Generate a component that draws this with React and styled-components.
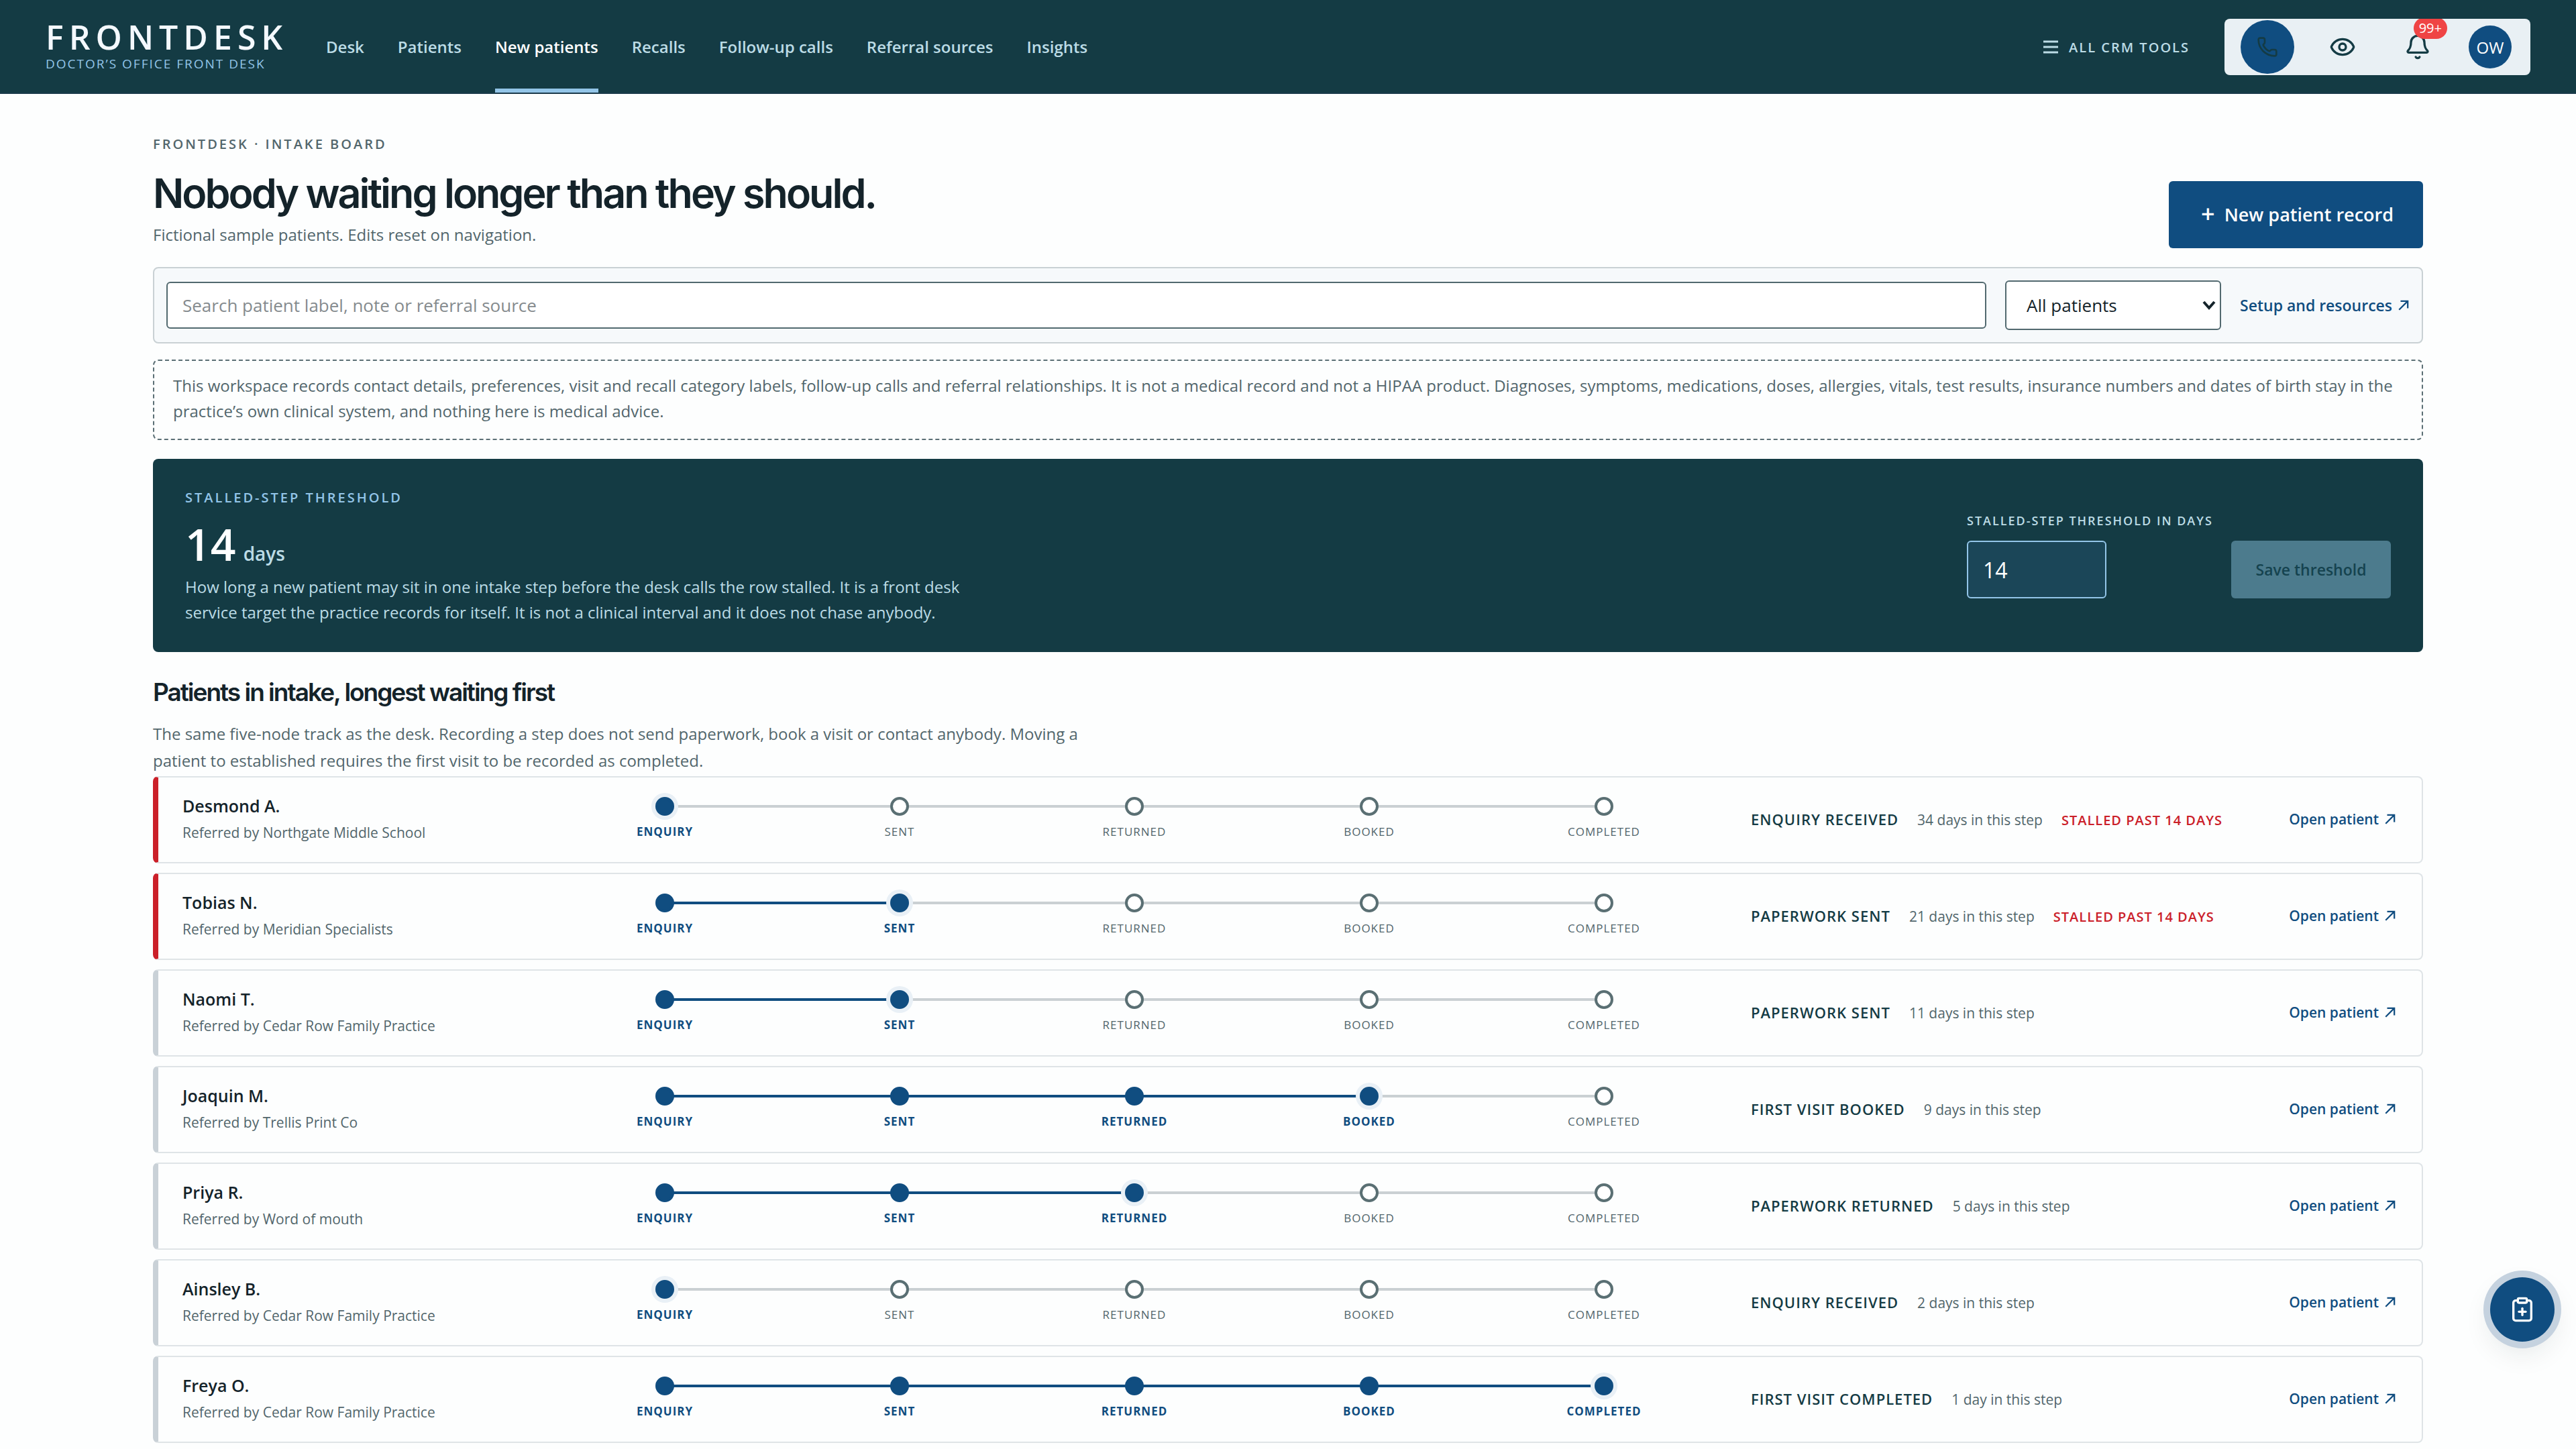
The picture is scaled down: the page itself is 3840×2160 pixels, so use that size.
import React, { useState } from "react";
import styled, { createGlobalStyle } from "styled-components";
import { Bell, ClipboardPlus, Eye, Phone } from "lucide-react";

const INK = "#14232a";
const DEEP = "#143b44";
const BLUE = "#104d80";
const MUTED = "#52666c";
const SKY = "#93c5e8";
const PALE = "#bcdce6";
const RED = "#cb2029";
const BODY_FONT = `"Trebuchet MS", "Open Sans", sans-serif`;

const navItems = [
  "Desk",
  "Patients",
  "New patients",
  "Recalls",
  "Follow-up calls",
  "Referral sources",
  "Insights",
];

const steps = ["Enquiry", "Sent", "Returned", "Booked", "Completed"];

const statusNames = [
  "Enquiry received",
  "Paperwork sent",
  "Paperwork returned",
  "First visit booked",
  "First visit completed",
];

const patients = [
  { name: "Desmond A.", source: "Northgate Middle School", step: 0, days: 34 },
  { name: "Tobias N.", source: "Meridian Specialists", step: 1, days: 21 },
  { name: "Naomi T.", source: "Cedar Row Family Practice", step: 1, days: 11 },
  { name: "Joaquin M.", source: "Trellis Print Co", step: 3, days: 9 },
  { name: "Priya R.", source: "Word of mouth", step: 2, days: 5 },
  { name: "Ainsley B.", source: "Cedar Row Family Practice", step: 0, days: 2 },
  { name: "Freya O.", source: "Cedar Row Family Practice", step: 4, days: 1 },
];

const ArrowIcon = () => (
  <Arrow viewBox="0 0 16 16" aria-hidden="true">
    <path d="M2 14 L13 3 M4 2.5 H13.5 V12" />
  </Arrow>
);

const MenuIcon = () => (
  <svg width="22" height="20" viewBox="0 0 22 20" aria-hidden="true">
    <path
      d="M0 2 H22 M0 10 H22 M0 18 H22"
      stroke="currentColor"
      strokeWidth="3"
    />
  </svg>
);

const PatientRow = ({ patient, threshold }) => {
  const stalled = patient.days > threshold;

  return (
    <Row $stalled={stalled}>
      <div>
        <PatientName>{patient.name}</PatientName>
        <Referral>Referred by {patient.source}</Referral>
      </div>
      <Track>
        {steps.map((step, i) => (
          <Step
            key={step}
            $done={i <= patient.step}
            $lineDone={i < patient.step}
          >
            <Node $done={i <= patient.step} $current={i === patient.step} />
            {step}
          </Step>
        ))}
      </Track>
      <Status>
        <StatusName>{statusNames[patient.step]}</StatusName>
        <span>
          {patient.days} {patient.days === 1 ? "day" : "days"} in this step
        </span>
        {stalled ? <Stalled>Stalled past {threshold} days</Stalled> : null}
      </Status>
      <OpenLink href="#patient">
        Open patient
        <ArrowIcon />
      </OpenLink>
    </Row>
  );
};

const App = () => {
  const [search, setSearch] = useState("");
  const [filter, setFilter] = useState("all");
  const [draft, setDraft] = useState("14");
  const [threshold, setThreshold] = useState(14);

  const onSubmitHandler = (e) => {
    e.preventDefault();
    setThreshold(Number(draft));
  };

  const visible = patients.filter(
    (item) =>
      `${item.name} ${item.source}`
        .toLowerCase()
        .includes(search.toLowerCase()) &&
      (filter === "all" || item.days > threshold)
  );

  return (
    <>
      <GlobalStyle />
      <Header>
        <Brand href="#home">
          <Logo>FRONTDESK</Logo>
          <Tagline>Doctor’s office front desk</Tagline>
        </Brand>
        <Nav>
          {navItems.map((item) => (
            <NavLink key={item} href="#nav" $active={item === "New patients"}>
              {item}
            </NavLink>
          ))}
        </Nav>
        <ToolsButton type="button">
          <MenuIcon />
          All CRM tools
        </ToolsButton>
        <Dock>
          <CallButton type="button" aria-label="Call">
            <Phone size={32} strokeWidth={2} />
          </CallButton>
          <DockButton type="button" aria-label="Preview">
            <Eye size={40} strokeWidth={2} />
          </DockButton>
          <DockButton type="button" aria-label="Notifications">
            <Bell size={40} strokeWidth={2} />
            <Badge>99+</Badge>
          </DockButton>
          <Avatar type="button">OW</Avatar>
        </Dock>
      </Header>

      <Main>
        <Heading>
          <div>
            <Eyebrow>Frontdesk · Intake board</Eyebrow>
            <Title>Nobody waiting longer than they should.</Title>
            <Subtitle>Fictional sample patients. Edits reset on navigation.</Subtitle>
          </div>
          <NewButton type="button">
            <Plus>+</Plus>New patient record
          </NewButton>
        </Heading>

        <FilterBar>
          <SearchInput
            type="text"
            aria-label="Search patients"
            value={search}
            placeholder="Search patient label, note or referral source"
            onChange={(e) => setSearch(e.target.value)}
          />
          <SelectWrap>
            <FilterSelect
              aria-label="Filter patients"
              value={filter}
              onChange={(e) => setFilter(e.target.value)}
            >
              <option value="all">All patients</option>
              <option value="stalled">Stalled</option>
            </FilterSelect>
            <Chevron viewBox="0 0 20 14" aria-hidden="true">
              <path d="M2 2 L10 11 L18 2" />
            </Chevron>
          </SelectWrap>
          <SetupLink href="#setup">
            Setup and resources
            <ArrowIcon />
          </SetupLink>
        </FilterBar>

        <Notice>
          This workspace records contact details, preferences, visit and recall
          category labels, follow-up calls and referral relationships. It is not
          a medical record and not a HIPAA product. Diagnoses, symptoms,
          medications, doses, allergies, vitals, test results, insurance numbers
          and dates of birth stay in the practice’s own clinical system, and
          nothing here is medical advice.
        </Notice>

        <Threshold>
          <div>
            <ThresholdLabel>Stalled-step threshold</ThresholdLabel>
            <ThresholdValue>
              {threshold} <small>days</small>
            </ThresholdValue>
            <ThresholdText>
              How long a new patient may sit in one intake step before the desk
              calls the row stalled. It is a front desk service target the
              practice records for itself. It is not a clinical interval and it
              does not chase anybody.
            </ThresholdText>
          </div>
          <ThresholdForm onSubmit={onSubmitHandler}>
            <Field>
              <FieldLabel htmlFor="threshold">
                Stalled-step threshold in days
              </FieldLabel>
              <DaysInput
                id="threshold"
                type="text"
                inputMode="numeric"
                value={draft}
                onChange={(e) => setDraft(e.target.value)}
              />
            </Field>
            <SaveButton type="submit" disabled={Number(draft) === threshold}>
              Save threshold
            </SaveButton>
          </ThresholdForm>
        </Threshold>

        <SectionTitle>Patients in intake, longest waiting first</SectionTitle>
        <SectionText>
          The same five-node track as the desk. Recording a step does not send
          paperwork, book a visit or contact anybody. Moving a patient to
          established requires the first visit to be recorded as completed.
        </SectionText>
        <List>
          {visible.map((item) => (
            <PatientRow key={item.name} patient={item} threshold={threshold} />
          ))}
        </List>
      </Main>

      <QuickAdd type="button" aria-label="Quick add">
        <ClipboardPlus size={40} strokeWidth={2} />
      </QuickAdd>
    </>
  );
};

export default App;

const GlobalStyle = createGlobalStyle`
  * {
    box-sizing: border-box;
  }
  body {
    margin: 0;
    background: #fdfefe;
    color: ${INK};
    font-family: ${BODY_FONT};
    font-size: 24px;
  }
  button, input, select {
    font-family: inherit;
  }
  button {
    border: none;
    cursor: pointer;
  }
  a {
    text-decoration: none;
  }
  h1, h2, p, ul, ol {
    margin: 0;
    padding: 0;
    list-style: none;
  }
`;

const Header = styled.header`
  display: flex;
  align-items: center;
  height: 140px;
  padding: 0 68px;
  background: ${DEEP};
  box-shadow: inset 0 -2px 0 #1b3a4a;
`;

const Brand = styled.a`
  display: flex;
  flex-direction: column;
  width: 370px;
  margin-right: 48px;
  padding-bottom: 6px;
  white-space: nowrap;
`;

const Logo = styled.span`
  color: #f4f9ff;
  font-size: 50px;
  line-height: 56px;
  font-weight: 600;
  letter-spacing: 8px;
`;

const Tagline = styled.span`
  color: ${SKY};
  font-size: 19px;
  line-height: 24px;
  letter-spacing: 2px;
  text-transform: uppercase;
`;

const Nav = styled.nav`
  display: flex;
  align-self: stretch;
  gap: 50px;
  padding-bottom: 2px;
`;

const NavLink = styled.a`
  display: flex;
  align-items: center;
  padding-top: 6px;
  border-bottom: 6px solid ${({ $active }) => ($active ? SKY : "transparent")};
  color: ${({ $active }) => ($active ? "#ffffff" : PALE)};
  font-weight: 600;
  white-space: nowrap;
`;

const ToolsButton = styled.button`
  display: flex;
  align-items: center;
  gap: 16px;
  margin: 0 52px 0 auto;
  padding: 0;
  background: none;
  color: ${PALE};
  font-size: 20px;
  font-weight: 600;
  letter-spacing: 2px;
  text-transform: uppercase;
`;

const Dock = styled.div`
  display: flex;
  align-items: center;
  gap: 32px;
  height: 84px;
  padding: 0 28px 0 24px;
  border-radius: 8px;
  background: #e9f0f4;
  overflow: hidden;
`;

const DockButton = styled.button`
  position: relative;
  display: flex;
  align-items: center;
  justify-content: center;
  width: 80px;
  height: 80px;
  padding: 0;
  border-radius: 50%;
  background: none;
  color: ${DEEP};
`;

const CallButton = styled(DockButton)`
  background: ${BLUE};
`;

const Badge = styled.span`
  position: absolute;
  top: -4px;
  right: -4px;
  padding: 0 8px;
  border-radius: 16px;
  background: #ef4444;
  color: #ffffff;
  font-size: 20px;
  line-height: 32px;
`;

const Avatar = styled(DockButton)`
  width: 64px;
  height: 64px;
  margin-left: 4px;
  background: ${BLUE};
  color: #ffffff;
  font-size: 24px;
`;

const Main = styled.main`
  padding: 60px 228px 0;
`;

const Heading = styled.div`
  display: flex;
  align-items: flex-end;
  justify-content: space-between;
`;

const Eyebrow = styled.p`
  color: ${MUTED};
  font-size: 20px;
  line-height: 30px;
  font-weight: 600;
  letter-spacing: 3px;
  text-transform: uppercase;
`;

const Title = styled.h1`
  margin-top: 20px;
  font-family: Inter, sans-serif;
  font-size: 61px;
  line-height: 76px;
  font-weight: 600;
  letter-spacing: -3px;
`;

const Subtitle = styled.p`
  margin-top: 4px;
  color: ${MUTED};
  line-height: 40px;
`;

const NewButton = styled.button`
  display: flex;
  align-items: center;
  gap: 14px;
  height: 100px;
  padding: 0 44px 2px 48px;
  border-radius: 6px;
  background: ${BLUE};
  color: #ffffff;
  font-size: 27px;
  font-weight: 600;
`;

const Plus = styled.span`
  font-size: 36px;
  line-height: 36px;
`;

const FilterBar = styled.div`
  display: flex;
  align-items: center;
  gap: 28px;
  margin-top: 28px;
  padding: 18px;
  border: 2px solid #c9d1d4;
  border-radius: 8px;
  background: #f6f9fb;
`;

const SearchInput = styled.input`
  flex: 1;
  min-width: 0;
  height: 70px;
  padding: 0 22px;
  border: 2px solid #52696f;
  border-radius: 6px;
  background: #ffffff;
  color: ${INK};
  font-size: 26px;
  &::placeholder {
    color: #858b8e;
  }
`;

const SelectWrap = styled.div`
  position: relative;
  width: 322px;
`;

const FilterSelect = styled.select`
  appearance: none;
  display: block;
  width: 100%;
  height: 74px;
  padding: 0 40px 0 30px;
  border: 2px solid #52696f;
  border-radius: 6px;
  background: #ffffff;
  color: ${INK};
  font-size: 26px;
`;

const Chevron = styled.svg`
  position: absolute;
  top: 30px;
  right: 8px;
  width: 20px;
  height: 14px;
  fill: none;
  stroke: ${INK};
  stroke-width: 4;
  pointer-events: none;
`;

const SetupLink = styled.a`
  display: flex;
  align-items: center;
  gap: 8px;
  color: ${BLUE};
  font-size: 23px;
  font-weight: 600;
  white-space: nowrap;
`;

const Arrow = styled.svg`
  flex-shrink: 0;
  width: 18px;
  height: 18px;
  fill: none;
  stroke: currentColor;
  stroke-width: 2;
`;

const Notice = styled.p`
  margin-top: 24px;
  padding: 18px 28px 22px;
  border: 2px dashed #5b6f75;
  border-radius: 8px;
  color: ${MUTED};
  line-height: 38px;
`;

const Threshold = styled.section`
  display: flex;
  align-items: center;
  justify-content: space-between;
  height: 288px;
  margin-top: 28px;
  padding: 0 48px;
  border-radius: 8px;
  background: ${DEEP};
`;

const ThresholdLabel = styled.p`
  padding-top: 4px;
  color: ${SKY};
  font-size: 20px;
  line-height: 28px;
  font-weight: 600;
  letter-spacing: 3px;
  text-transform: uppercase;
`;

const ThresholdValue = styled.p`
  margin-top: 16px;
  color: #ffffff;
  font-size: 66px;
  line-height: 76px;
  font-weight: 600;
  small {
    margin-left: -6px;
    color: ${PALE};
    font-size: 28px;
    line-height: 28px;
    font-weight: 600;
  }
`;

const ThresholdText = styled.p`
  max-width: 1160px;
  margin-top: 8px;
  color: ${PALE};
  line-height: 38px;
`;

const ThresholdForm = styled.form`
  display: flex;
  align-items: flex-end;
  gap: 24px;
`;

const Field = styled.div`
  display: flex;
  flex-direction: column;
  gap: 18px;
  width: 370px;
`;

const FieldLabel = styled.label`
  color: ${PALE};
  font-size: 18px;
  line-height: 24px;
  font-weight: 600;
  letter-spacing: 2px;
  text-transform: uppercase;
  white-space: nowrap;
`;

const DaysInput = styled.input`
  width: 208px;
  height: 86px;
  padding: 0 22px;
  border: 2px solid ${SKY};
  border-radius: 6px;
  background: #1b4658;
  color: #ffffff;
  font-size: 32px;
`;

const SaveButton = styled.button`
  height: 86px;
  width: 238px;
  border-radius: 6px;
  background: ${SKY};
  color: ${DEEP};
  font-size: 23px;
  font-weight: 600;
  white-space: nowrap;
  &:disabled {
    background: #4c7b8d;
    color: #15434f;
  }
`;

const SectionTitle = styled.h2`
  margin-top: 36px;
  font-family: Inter, sans-serif;
  font-size: 37px;
  line-height: 48px;
  font-weight: 600;
  letter-spacing: -2px;
`;

const SectionText = styled.p`
  max-width: 1400px;
  margin-top: 18px;
  padding-bottom: 3px;
  color: ${MUTED};
  line-height: 40px;
`;

const List = styled.ul`
  display: flex;
  flex-direction: column;
  gap: 14px;
`;

const Row = styled.li`
  display: grid;
  grid-template-columns: 500px minmax(0, 1fr) 760px 158px;
  column-gap: 44px;
  align-items: center;
  height: 130px;
  padding: 0 38px 2px 36px;
  border: 2px solid #dfe4e7;
  border-left: 8px solid ${({ $stalled }) => ($stalled ? RED : "#c9d1d7")};
  border-radius: 8px;
`;

const PatientName = styled.p`
  font-size: 25px;
  line-height: 40px;
  font-weight: 600;
`;

const Referral = styled.p`
  color: ${MUTED};
  font-size: 21px;
  line-height: 40px;
`;

const Track = styled.ol`
  display: grid;
  grid-template-columns: repeat(5, minmax(0, 1fr));
`;

const Step = styled.li`
  position: relative;
  display: flex;
  flex-direction: column;
  align-items: center;
  gap: 10px;
  color: ${({ $done }) => ($done ? BLUE : MUTED)};
  font-size: 17px;
  line-height: 28px;
  font-weight: ${({ $done }) => ($done ? 700 : 400)};
  letter-spacing: 1px;
  text-transform: uppercase;
  &:not(:last-child)::after {
    content: "";
    position: absolute;
    top: 12px;
    left: 50%;
    width: 100%;
    height: 4px;
    background: ${({ $lineDone }) => ($lineDone ? BLUE : "#cad0d3")};
  }
`;

const Node = styled.span`
  position: relative;
  z-index: 1;
  width: 28px;
  height: 28px;
  border: 4px solid ${({ $done }) => ($done ? BLUE : "#5a6f73")};
  border-radius: 50%;
  background: ${({ $done }) => ($done ? BLUE : "#ffffff")};
  box-shadow: ${({ $current }) => ($current ? "0 0 0 6px #e9f0f6" : "none")};
`;

const Status = styled.div`
  display: flex;
  align-items: baseline;
  gap: 28px;
  color: ${MUTED};
  font-size: 21px;
  white-space: nowrap;
`;

const StatusName = styled.strong`
  color: ${DEEP};
  font-size: 22px;
  font-weight: 600;
  letter-spacing: 1px;
  text-transform: uppercase;
`;

const Stalled = styled.span`
  color: ${RED};
  font-size: 20px;
  font-weight: 600;
  letter-spacing: 1px;
  text-transform: uppercase;
`;

const OpenLink = styled(SetupLink)`
  justify-content: flex-end;
  font-size: 21px;
`;

const QuickAdd = styled.button`
  position: fixed;
  right: 32px;
  bottom: 160px;
  display: flex;
  align-items: center;
  justify-content: center;
  width: 96px;
  height: 96px;
  padding: 0;
  border-radius: 50%;
  background: ${BLUE};
  color: #ffffff;
  box-shadow: 0 0 0 10px #c5d2df, 0 16px 40px rgba(20, 35, 42, 0.1);
`;
